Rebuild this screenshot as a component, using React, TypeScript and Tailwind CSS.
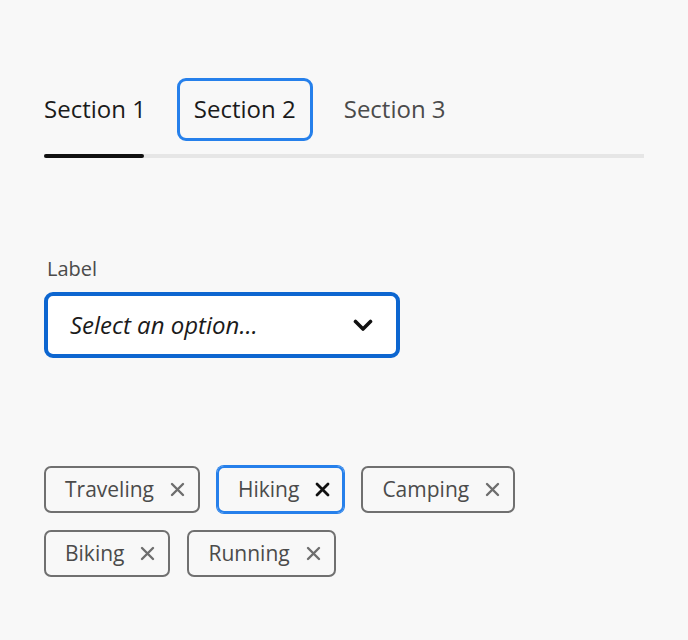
import { useState } from "react"

const font = { fontFamily: '"Open Sans", "Noto Sans", sans-serif' }

const tabs = ["Section 1", "Section 2", "Section 3"]
const tags = ["Traveling", "Hiking", "Camping", "Biking", "Running"]

function CrossIcon({ dark }: { dark?: boolean }) {
  return (
    <svg width="15" height="15" viewBox="0 0 15 15" className="shrink-0">
      <path
        d="M2 2 L13 13 M13 2 L2 13"
        stroke={dark ? "#111111" : "#6e6e6e"}
        strokeWidth={dark ? 2.8 : 2.4}
        strokeLinecap="round"
      />
    </svg>
  )
}

function Chevron() {
  return (
    <svg width="20" height="13" viewBox="0 0 20 13" className="shrink-0">
      <path
        d="M2.5 2.5 L10 10 L17.5 2.5"
        fill="none"
        stroke="#111111"
        strokeWidth="3.6"
        strokeLinecap="round"
        strokeLinejoin="round"
      />
    </svg>
  )
}

export default function App() {
  const [selected] = useState(0)

  return (
    <div className="min-h-[640px] w-full bg-[#f8f8f8] px-[44px] pt-[78px]" style={font}>
      {/* Tabs */}
      <div className="-mx-[17px] flex gap-[14px]">
        {tabs.map((tab, i) => (
          <div
            key={tab}
            className={
              i === 1
                ? "flex h-[63px] items-center rounded-[9px] border-[3px] border-[#2680eb] px-[14px] pb-[2px] text-[24px] text-[#1b1b1b]"
                : i === selected
                  ? "flex h-[63px] items-center rounded-[9px] border-[3px] border-transparent px-[14px] pb-[2px] text-[24px] text-[#1b1b1b]"
                  : "flex h-[63px] items-center rounded-[9px] border-[3px] border-transparent px-[14px] pb-[2px] text-[24px] text-[#4b4b4b]"
            }
          >
            {tab}
          </div>
        ))}
      </div>
      <div className="mt-[13px] h-1 w-[600px] bg-[#e6e6e6]">
        <div className="h-1 w-[100px] rounded-full bg-[#111111]" />
      </div>

      {/* Picker */}
      <div className="mt-[99px] pl-[3px] text-[20px] leading-[24px] text-[#4b4b4b]">Label</div>
      <button className="mt-[11px] flex h-[66px] w-[356px] items-center justify-between rounded-[9px] border-4 border-[#0d66d0] bg-white pl-[22px] pr-[23px]">
        <span className="text-[24px] italic text-[#1b1b1b]">Select an option…</span>
        <Chevron />
      </button>

      {/* Tags */}
      <div className="mt-[108px] flex w-[520px] flex-wrap gap-x-[17px] gap-y-[17px]">
        {tags.map((tag) => (
          <div
            key={tag}
            className={
              tag === "Hiking"
                ? "flex h-[47px] items-center gap-[16px] rounded-[7px] border-2 border-[#2680eb] pl-[19px] pr-[12px] text-[21px] text-[#4b4b4b] shadow-[0_0_0_1px_#2680eb]"
                : "flex h-[47px] items-center gap-[16px] rounded-[7px] border-2 border-[#707070] pl-[19px] pr-[13px] text-[21px] text-[#4b4b4b]"
            }
          >
            <span>{tag}</span>
            <CrossIcon dark={tag === "Hiking"} />
          </div>
        ))}
      </div>
    </div>
  )
}
